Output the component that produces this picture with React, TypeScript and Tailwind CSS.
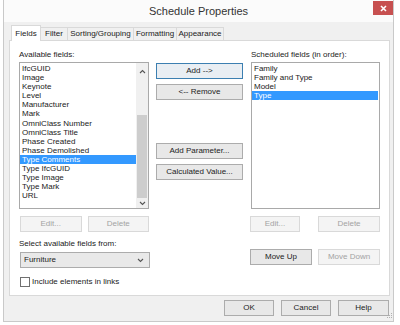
import React from "react";

const available = [
  "IfcGUID",
  "Image",
  "Keynote",
  "Level",
  "Manufacturer",
  "Mark",
  "OmniClass Number",
  "OmniClass Title",
  "Phase Created",
  "Phase Demolished",
  "Type Comments",
  "Type IfcGUID",
  "Type Image",
  "Type Mark",
  "URL",
];

const scheduled = ["Family", "Family and Type", "Model", "Type"];

type BtnProps = {
  label: string;
  w: string;
  kind?: "normal" | "default" | "disabled";
  className?: string;
};

const Btn = ({ label, w, kind = "normal", className = "" }: BtnProps) => {
  const look =
    kind === "disabled"
      ? "border-[#d9d9d9] bg-[#f4f4f4] text-[#a3a3a3]"
      : kind === "default"
      ? "border-[#3c7fb1] bg-[#e9eef3] text-[#222]"
      : "border-[#acacac] bg-[#e8e8e8] text-[#222]";
  return (
    <div className={`${w} h-[16px] border ${look} flex items-center justify-center text-[8px] leading-none ${className}`}>
      {label}
    </div>
  );
};

const Row = ({ text, selected }: { text: string; selected?: boolean }) => (
  <div
    className={`h-[9.1px] leading-[9.1px] pl-[2px] text-[8px] whitespace-nowrap ${
      selected ? "bg-[#3399ff] text-white" : "text-[#222]"
    }`}
  >
    {text}
  </div>
);

const Chevron = ({ up }: { up?: boolean }) => (
  <svg width="7" height="5" viewBox="0 0 7 5">
    <path
      d={up ? "M1 4 L3.5 1.5 L6 4" : "M1 1 L3.5 3.5 L6 1"}
      fill="none"
      stroke="#555"
      strokeWidth="1.1"
    />
  </svg>
);

const tabs = [
  { t: "Fields", w: "w-[30px]" },
  { t: "Filter", w: "w-[28px]" },
  { t: "Sorting/Grouping", w: "w-[67px]" },
  { t: "Formatting", w: "w-[44px]" },
  { t: "Appearance", w: "w-[48px]" },
];

export default function App() {
  return (
    <div className="w-[400px] h-[325px] bg-white font-['Liberation_Sans',Arial,sans-serif] overflow-hidden">
      <div className="ml-[3px] w-[391px] h-[322px] border-x border-b border-[#c9c9c9] bg-[#f0f0f0] flex flex-col">
        {/* title bar */}
        <div className="h-[22px] bg-[#fbfbfb] flex items-start relative shrink-0">
          <div className="flex-1 pt-[3px] text-center text-[11px] leading-[16px] text-[#333]">
            Schedule Properties
          </div>
          <div className="absolute right-[0px] top-[1px] w-[20px] h-[14px] bg-[#c75050] flex items-center justify-center">
            <svg width="7" height="7" viewBox="0 0 7 7">
              <path d="M1 1 L6 6 M6 1 L1 6" stroke="white" strokeWidth="1.6" />
            </svg>
          </div>
        </div>

        <div className="pl-[5px] pr-[3px] pt-[3px] flex flex-col">
          {/* tabs */}
          <div className="h-[16px] -mb-px flex items-start pl-[2px]">
            {tabs.map((tab, i) =>
              i === 0 ? (
                <div
                  key={tab.t}
                  className={`${tab.w} h-[16px] relative z-10 bg-white border-t border-x border-[#d9d9d9] flex items-center justify-center text-[8px] text-[#222]`}
                >
                  {tab.t}
                </div>
              ) : (
                <div
                  key={tab.t}
                  className={`${tab.w} h-[13px] mt-[2px] -ml-px bg-[#f0f0f0] border-t border-x border-[#d9d9d9] flex items-center justify-center text-[8px] text-[#222]`}
                >
                  {tab.t}
                </div>
              )
            )}
          </div>

          {/* panel */}
          <div className="w-[381px] h-[256px] border border-[#d9d9d9] bg-white flex pl-[9px] pt-[9px]">
            {/* left column */}
            <div className="w-[130px] flex flex-col">
              <div className="h-[10px] leading-[10px] text-[8px] text-[#222]">Available fields:</div>
              <div className="mt-[2px] h-[147px] border border-[#a9a9a9] bg-white flex">
                <div className="flex-1 pt-[1px]">
                  {available.map((f) => (
                    <Row key={f} text={f} selected={f === "Type Comments"} />
                  ))}
                </div>
                <div className="w-[12px] bg-[#f0f0f0] flex flex-col items-center">
                  <div className="h-[12px] flex items-center justify-center mt-[2px]">
                    <Chevron up />
                  </div>
                  <div className="mt-[38px] w-[10px] h-[83px] bg-[#cdcdcd]" />
                  <div className="flex-1 flex items-center justify-center">
                    <Chevron />
                  </div>
                </div>
              </div>
              <div className="mt-[7px] flex gap-[6px] pl-[1px]">
                <Btn label="Edit..." w="w-[62px]" kind="disabled" />
                <Btn label="Delete" w="w-[62px]" kind="disabled" />
              </div>
              <div className="mt-[7px] h-[10px] leading-[10px] text-[8px] text-[#222]">
                Select available fields from:
              </div>
              <div className="mt-[3px] ml-[1px] w-[130px] h-[16px] border border-[#acacac] bg-[#e9e9e9] flex items-center justify-between pl-[3px] pr-[5px] text-[8px] text-[#222]">
                <span>Furniture</span>
                <Chevron />
              </div>
              <div className="mt-[9px] ml-[1px] flex items-center gap-[2px]">
                <div className="w-[10px] h-[10px] border border-[#707070] bg-white" />
                <span className="text-[8px] leading-none text-[#222]">Include elements in links</span>
              </div>
            </div>

            {/* middle column */}
            <div className="ml-[7px] w-[87px] flex flex-col">
              <Btn label="Add -->" w="w-[87px]" kind="default" className="mt-[13px] h-[15px]" />
              <Btn label="<-- Remove" w="w-[87px]" className="mt-[5px]" />
              <Btn label="Add Parameter..." w="w-[87px]" className="mt-[43px]" />
              <Btn label="Calculated Value..." w="w-[87px]" className="mt-[5px]" />
            </div>

            {/* right column */}
            <div className="ml-[7px] w-[130px] flex flex-col">
              <div className="h-[10px] leading-[10px] text-[8px] text-[#222] pl-[1px]">
                Scheduled fields (in order):
              </div>
              <div className="mt-[2px] ml-[1px] w-[129px] h-[147px] border border-[#a9a9a9] bg-white pt-[1px] pr-[1px]">
                {scheduled.map((f) => (
                  <Row key={f} text={f} selected={f === "Type"} />
                ))}
              </div>
              <div className="mt-[7px] flex">
                <Btn label="Edit..." w="w-[50px]" kind="disabled" />
                <Btn label="Delete" w="w-[62px]" kind="disabled" className="ml-[18px]" />
              </div>
              <div className="mt-[17px] flex">
                <Btn label="Move Up" w="w-[62px]" />
                <Btn label="Move Down" w="w-[62px]" kind="disabled" className="ml-[6px]" />
              </div>
            </div>
          </div>

          {/* bottom buttons */}
          <div className="mt-[4px] flex justify-end gap-[7px] pr-[1px] relative">
            <Btn label="OK" w="w-[50px]" />
            <Btn label="Cancel" w="w-[50px]" />
            <Btn label="Help" w="w-[51px]" />
            <svg className="absolute right-[-3px] top-[13px]" width="6" height="6" viewBox="0 0 6 6">
              <rect x="4" y="0" width="1" height="1" fill="#b0b0b0" />
              <rect x="2" y="2" width="1" height="1" fill="#b0b0b0" />
              <rect x="4" y="2" width="1" height="1" fill="#b0b0b0" />
              <rect x="0" y="4" width="1" height="1" fill="#b0b0b0" />
              <rect x="2" y="4" width="1" height="1" fill="#b0b0b0" />
              <rect x="4" y="4" width="1" height="1" fill="#b0b0b0" />
            </svg>
          </div>
        </div>
      </div>
    </div>
  );
}
